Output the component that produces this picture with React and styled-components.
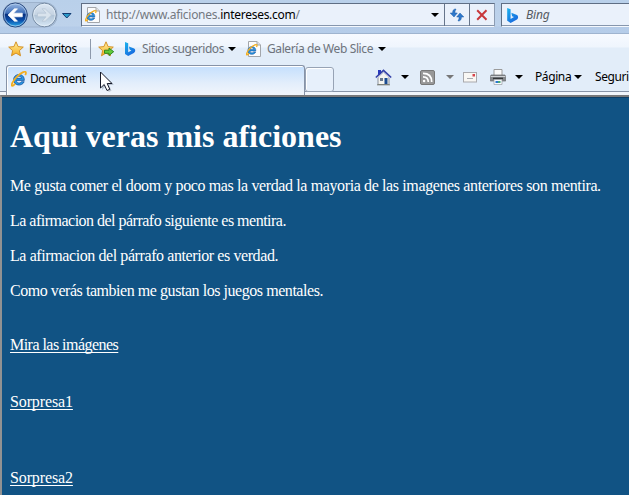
import React from "react";
import styled, { createGlobalStyle } from "styled-components";

const Global = createGlobalStyle`
  html, body, #root { margin: 0; height: 495px; overflow: hidden; }
  * { box-sizing: border-box; }
`;

const Browser = styled.div`
  position: relative;
  width: 629px;
  height: 495px;
  overflow: hidden;
  display: flex;
  flex-direction: column;
  background: #e3edf9;
  font: 12px/16px "Noto Sans", "Open Sans", sans-serif;
  color: #000;
  white-space: nowrap;
`;

const NavBar = styled.header`
  flex: none;
  height: 34px;
  display: flex;
  align-items: flex-start;
  padding: 3px 0 0 2px;
  background: linear-gradient(#b9d0ea 0, #bdd2eb 26px, #b4cbe8 27px, #b6cde9 33px, #9fb4cf 33px);
`;

const NavButtons = styled.div`
  flex: none;
  width: 79px;
  height: 27px;
  margin-top: -2px;
  svg { display: block; }
`;

const Field = styled.div`
  display: flex;
  align-items: center;
  flex: none;
  width: ${(p) => p.$width}px;
  height: 24px;
  border: 1px solid #5f6e84;
  border-right-color: #8c9cb3;
  border-bottom-color: #f4f8fd;
  background: #eaf1fb;
  box-shadow: inset 0 -1px #8696ad;
  padding-left: ${(p) => p.$pad}px;
  margin-right: 6px;
  svg { flex: none; }
`;

const Cell = styled.div`
  display: flex;
  align-items: center;
  justify-content: center;
  flex: none;
  width: 25px;
  height: 22px;
  border-left: 1px solid #66758b;
`;

const Label = styled.span`
  flex: none;
  width: ${(p) => p.$width}px;
  margin-left: ${(p) => p.$left || 0}px;
  letter-spacing: ${(p) => p.$track || 0}px;
  color: ${(p) => p.$color || "#000"};
  font-style: ${(p) => (p.$italic ? "italic" : "normal")};
  b { font-weight: 400; color: #000; }
`;

const FavoritesBar = styled.nav`
  flex: none;
  height: 31px;
  display: flex;
  align-items: center;
  padding: 0 0 1px 8px;
  background: linear-gradient(#f7faff, #eff5fd 13px, #e2edf9 14px, #e2edf9);
  svg { flex: none; }
`;

const Divider = styled.i`
  width: 1px;
  height: 20px;
  margin: 0 7px 0 13px;
  background: #8d99ab;
`;

const TabStrip = styled.div`
  flex: none;
  height: 30px;
  display: flex;
  align-items: flex-start;
  padding-left: 6px;
  background: linear-gradient(#e2edf9 26px, #8793a7 26px, #8793a7 27px, #f1f5fb 27px);
`;

const Tab = styled.div`
  display: flex;
  align-items: center;
  flex: none;
  width: 299px;
  height: 30px;
  padding: 0 0 3px 4px;
  border: 1px solid #8793a7;
  border-bottom: 0;
  border-radius: 3px 3px 0 0;
  background: linear-gradient(#c4dffd, #e3eefb 60%, #f1f5fb);
  box-shadow: inset 1px 1px #fff;
`;

const NewTab = styled.div`
  flex: none;
  width: 29px;
  height: 25px;
  margin-top: 2px;
  border: 1px solid #97a3b5;
  border-radius: 3px;
  background: #e7f0fb;
  box-shadow: inset 1px 1px #fff;
`;

const CommandBar = styled.div`
  display: flex;
  align-items: center;
  height: 24px;
  padding-left: 41px;
  svg { flex: none; }
`;

const Gap = styled.i`
  flex: none;
  width: ${(p) => p.$w}px;
`;

const Page = styled.main`
  flex: 1;
  border-top: 2px solid #77787a;
  border-left: 2px solid #929292;
  box-shadow: inset 0 1px #0d3e66;
  background: #115384;
  color: #fff;
  padding: 21px 8px 0;
  font: 16px/19px "Liberation Serif", serif;
`;

const Title = styled.h1`
  margin: 0 0 21px;
  font-size: 32px;
  line-height: 37px;
`;

const Paragraph = styled.p`
  margin: 0 0 16px;
  letter-spacing: ${(p) => p.$track || 0}px;
`;

const PageLink = styled.a`
  display: block;
  width: max-content;
  margin-top: ${(p) => p.$top}px;
  letter-spacing: ${(p) => p.$track || 0}px;
  text-decoration: underline;
  text-underline-offset: 2px;
  text-decoration-thickness: 1px;
  text-decoration-skip-ink: none;
`;

const Pointer = styled.svg`
  position: absolute;
  left: 99px;
  top: 71px;
`;

const Arrow = ({ color = "#000" }) => (
  <svg width="8" height="4" viewBox="0 0 8 4"><path d="M0 0H8L4 4Z" fill={color} /></svg>
);

const IeGlyph = () => (
  <>
    <path d="M12.9 9.1H5.1C5.4 12 9.2 12.3 10 10.4H12.8C10.5 15.5 2.5 14.3 2.5 8.5C2.5 1.8 13.3 1.4 12.9 9.1ZM5.3 7.1H10.1C9.8 4.3 5.8 4.3 5.3 7.1Z" fill="#2a97e2" stroke="#0e4d9c" strokeWidth=".7" />
    <path d="M4 12.2C1.2 15.6-.2 14.7 1.3 11.4C3.2 7.4 8 2.7 11.8 1.1C14.5 0 15.1 1.5 13.8 4" fill="none" stroke="#f2ae20" strokeWidth="1.7" />
  </>
);

const IeIcon = ({ size = 15 }) => (
  <svg width={size} height={size} viewBox="0 0 15.5 15.5"><IeGlyph /></svg>
);

const IePage = () => (
  <svg width="16" height="16" viewBox="0 0 16 16">
    <path d="M2.5.5H11L14.5 4V15.5H2.5Z" fill="#fcfcfc" stroke="#a3a6ab" />
    <path d="M11 .5V4H14.5" fill="#e2e2e2" stroke="#a3a6ab" />
    <g transform="translate(0 3) scale(.76)"><IeGlyph /></g>
  </svg>
);

const Bing = ({ size = 16 }) => (
  <svg width={size} height={size} viewBox="0 0 16 16">
    <defs><linearGradient id="bing" x2=".6" y2="1"><stop stopColor="#1bb4ed" /><stop offset="1" stopColor="#1769df" /></linearGradient></defs>
    <path d="M3 1L6.2 2.2V11.2L9.4 9.4L7.6 8.6L6.9 5.5L12.2 7.5Q13.5 8.1 13.2 10Q13 11.2 11.8 12L6.2 15L3 13Z" fill="url(#bing)" />
  </svg>
);

const starPath = "M8 .8L10.1 5.6L15.3 6.1L11.4 9.6L12.5 14.8L8 12.1L3.5 14.8L4.6 9.6L.7 6.1L5.9 5.6Z";
const Star = ({ add }) => (
  <svg width="16" height="16" viewBox="0 0 16 16">
    <defs><linearGradient id="star" x2="0" y2="1"><stop stopColor="#fff1a4" /><stop offset="1" stopColor="#f6ac1c" /></linearGradient></defs>
    <path d={starPath} fill="url(#star)" stroke="#d08a1b" strokeWidth=".9" />
    {add && <path d="M6.5 9.2H11V7L15.7 10.7L11 14.5V12.3H6.5Z" fill="#62ca39" stroke="#23801c" strokeWidth=".9" />}
  </svg>
);

const BackForward = () => (
  <svg width="72" height="28" viewBox="0 0 72 28">
    <defs>
      <linearGradient id="back" x2="0" y2="1"><stop stopColor="#9bb9e3" /><stop offset=".42" stopColor="#3f6fb9" /><stop offset=".48" stopColor="#083080" /><stop offset=".72" stopColor="#0a4eaa" /><stop offset="1" stopColor="#2aafec" /></linearGradient>
      <linearGradient id="fwd" x2="0" y2="1"><stop stopColor="#dce7f3" /><stop offset=".48" stopColor="#c5d3e2" /><stop offset=".5" stopColor="#b0c3d6" /><stop offset="1" stopColor="#d8e8f6" /></linearGradient>
    </defs>
    <path d="M13 1.5H43Q55 3 55 14Q55 26 43 26H13Q1 25 1 14Q1 3 13 1.5Z" fill="#b1c6df" stroke="#9db2cc" />
    <circle cx="13.3" cy="14" r="12" fill="url(#back)" stroke="#28477d" />
    <circle cx="13.3" cy="14" r="11" fill="none" stroke="#b9d3ee" strokeWidth=".7" />
    <path d="M6 14L12.4 7.8H15.5L11.5 12.2H20.3V15.8H11.5L15.5 20.2H12.4Z" fill="#fff" stroke="#fff" strokeWidth=".7" />
    <circle cx="42.4" cy="14" r="11.8" fill="url(#fwd)" stroke="#7489a2" />
    <circle cx="42.4" cy="14" r="10.8" fill="none" stroke="#e8f2fa" strokeWidth=".7" />
    <path d="M49.6 14L43.2 7.8H40L44 12.2H35.5V15.8H44L40 20.2H43.2Z" fill="#d9e3ed" stroke="#b5c4d4" strokeWidth=".7" />
    <path d="M60.5 12.5H69L64.8 17Z" fill="#2a9ac9" stroke="#123b72" />
  </svg>
);

const Refresh = () => (
  <svg width="16" height="16" viewBox="0 0 16 16" fill="#2e78cb" stroke="#1b5aa6" strokeWidth=".5">
    <path d="M7 2Q3.6 1.8 3.6 6H1.2L5 10L8.3 6H5.9Q5.7 4 7 2Z" />
    <path d="M9 14Q12.4 14.2 12.4 10H14.8L11 6L7.7 10H10.1Q10.3 12 9 14Z" />
  </svg>
);

const Stop = () => (
  <svg width="12" height="12" viewBox="0 0 12 12"><path d="M1.2 1.3L10.5 10.7M10.5 1.3L1.2 10.7" stroke="#c8373b" strokeWidth="2" /></svg>
);

const Home = () => (
  <svg width="17" height="17" viewBox="0 0 17 17">
    <path d="M3 1H6V6H3Z" fill="#2838bd" />
    <path d="M3 8L8.5 3L14 8V15.5H3Z" fill="#f4f4ef" stroke="#89909d" />
    <path d="M.8 8.5L8.5 1.4L16.2 8.5" fill="none" stroke="#3440a8" strokeWidth="1.6" />
    <path d="M1.8 9.2L8.5 3.4L15.2 9.2" fill="none" stroke="#c8cde9" />
    <path d="M5 9H8V12H5Z" fill="#69788d" /><path d="M9.5 9H12.5V15H9.5Z" fill="#194b91" />
    <path d="M2 15.8H15" stroke="#787b6e" />
  </svg>
);

const Feed = () => (
  <svg width="15" height="15" viewBox="0 0 15 15">
    <rect x=".5" y=".5" width="14" height="14" rx="1.5" fill="#989898" stroke="#787878" />
    <circle cx="4.1" cy="11" r="1.3" fill="#fff" />
    <path d="M3 6.8Q8.3 6.8 8.3 12M3 3.4Q11.7 3.4 11.7 12" fill="none" stroke="#fff" strokeWidth="1.7" />
  </svg>
);

const Mail = () => (
  <svg width="14" height="11" viewBox="0 0 14 11">
    <rect x=".5" y=".5" width="13" height="9.5" fill="#f8f7f4" stroke="#a9a9ad" />
    <path d="M9.5 2H12V4.5H9.5Z" fill="#d6434b" /><path d="M4 6.5H10" stroke="#a8aab0" />
  </svg>
);

const Printer = () => (
  <svg width="16" height="16" viewBox="0 0 16 16">
    <path d="M4 .5H12V7H4Z" fill="#fbfbfb" stroke="#9b9b9b" />
    <path d="M1 6H15L15.7 8V12H.3V8Z" fill="#85888c" stroke="#686a6d" strokeWidth=".7" />
    <path d="M.7 7.5H15.3" stroke="#cfd2d5" /><path d="M3 9.5H13" stroke="#35383a" strokeWidth="1.6" />
    <path d="M4 10.5H12V15.5H4Z" fill="#f8fbfd" stroke="#9a9da2" strokeWidth=".7" />
    <path d="M5.5 12H8V14H5.5Z" fill="#2b76cf" /><path d="M8 12H10.5V14H8Z" fill="#47a57a" />
  </svg>
);

export default function App() {
  return (
    <Browser>
      <Global />
      <NavBar>
        <NavButtons><BackForward /></NavButtons>
        <Field $width={414} $pad={3}>
          <IePage />
          <Label $width={325} $left={5} $track={-0.27} $color="#747981">http://www.aficiones.<b>intereses.com</b>/</Label>
          <Arrow />
          <Gap $w={5} />
          <Cell><Refresh /></Cell>
          <Cell><Stop /></Cell>
        </Field>
        <Field $width={140} $pad={2}>
          <Bing size={17} />
          <Label $width={60} $left={5} $track={-0.2} $italic $color="#555a62">Bing</Label>
        </Field>
      </NavBar>
      <FavoritesBar>
        <Star />
        <Label $width={48} $left={5} $track={-0.44}>Favoritos</Label>
        <Divider />
        <Star add />
        <Gap $w={8} />
        <Bing />
        <Label $width={84} $left={4} $track={-0.44} $color="#6e737b">Sitios sugeridos</Label>
        <Gap $w={2} />
        <Arrow />
        <Gap $w={10} />
        <IePage />
        <Label $width={107} $left={5} $track={-0.4} $color="#6e737b">Galería de Web Slice</Label>
        <Gap $w={4} />
        <Arrow />
      </FavoritesBar>
      <TabStrip>
        <Tab><IeIcon size={16} /><Label $width={57} $left={3} $track={-0.4}>Document</Label></Tab>
        <NewTab />
        <CommandBar>
          <Home /><Gap $w={9} /><Arrow /><Gap $w={11} />
          <Feed /><Gap $w={11} /><Arrow color="#777" /><Gap $w={9} />
          <Mail /><Gap $w={13} /><Printer /><Gap $w={9} /><Arrow />
          <Label $width={37} $left={12} $track={-0.4}>Página</Label><Gap $w={2} /><Arrow />
          <Label $width={60} $left={13} $track={-0.4}>Seguridad</Label>
        </CommandBar>
      </TabStrip>
      <Page>
        <Title>Aqui veras mis aficiones</Title>
        <Paragraph $track={-0.38}>Me gusta comer el doom y poco mas la verdad la mayoria de las imagenes anteriores son mentira.</Paragraph>
        <Paragraph $track={-0.51}>La afirmacion del párrafo siguiente es mentira.</Paragraph>
        <Paragraph $track={-0.41}>La afirmacion del párrafo anterior es verdad.</Paragraph>
        <Paragraph $track={-0.45}>Como verás tambien me gustan los juegos mentales.</Paragraph>
        <PageLink $top={35} $track={-0.53}>Mira las imágenes</PageLink>
        <PageLink $top={38} $track={-0.12}>Sorpresa1</PageLink>
        <PageLink $top={57} $track={-0.12}>Sorpresa2</PageLink>
      </Page>
      <Pointer width="18" height="22" viewBox="0 0 18 22">
        <path d="M3 3V19L7 15L9.8 21L12.5 19.8L10 14H15Z" fill="#6b7788" opacity=".35" />
        <path d="M1.5 1V17L5.2 13.5L8 19.5L10.8 18.3L8.2 12.5H13Z" fill="#fff" stroke="#171b2b" />
      </Pointer>
    </Browser>
  );
}
